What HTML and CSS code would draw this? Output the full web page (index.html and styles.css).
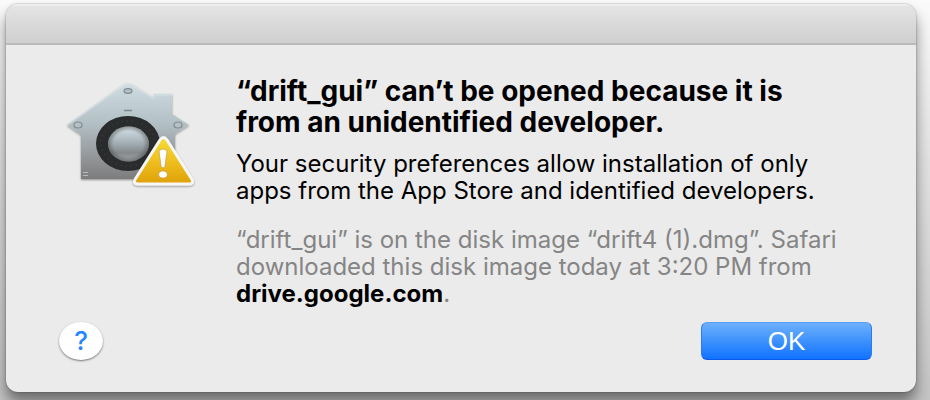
FILE: index.html
```html
<!DOCTYPE html>
<html lang="en">
<head>
<meta charset="utf-8">
<title>Unidentified developer</title>
<link rel="stylesheet" href="styles.css">
</head>
<body>
<main class="dialog" role="alertdialog" aria-labelledby="title" aria-describedby="message">
  <header class="titlebar"></header>
  <div class="content">
    <svg class="icon" viewBox="0 0 140 112" preserveAspectRatio="none" aria-hidden="true">
      <defs>
        <linearGradient id="house" x1="0" y1="0" x2="0" y2="1">
          <stop offset="0" stop-color="#cfdde2"/><stop offset=".4" stop-color="#b4c2c8"/><stop offset=".75" stop-color="#96999b"/><stop offset="1" stop-color="#7c7c7c"/>
        </linearGradient>
        <linearGradient id="knob" x1="0" y1="0" x2="0" y2="1">
          <stop offset="0" stop-color="#d5e4ea"/><stop offset=".45" stop-color="#a5b1b7"/><stop offset=".75" stop-color="#85898c"/><stop offset="1" stop-color="#a5a8aa"/>
        </linearGradient>
        <radialGradient id="edge"><stop offset=".72" stop-color="#444" stop-opacity="0"/><stop offset="1" stop-color="#444" stop-opacity=".5"/></radialGradient>
        <linearGradient id="warn" x1="0" y1="0" x2="0" y2="1">
          <stop offset="0" stop-color="#f7dc35"/><stop offset=".5" stop-color="#efc020"/><stop offset="1" stop-color="#dfa008"/>
        </linearGradient>
        <filter id="shade" x="-10%" y="-10%" width="125%" height="130%"><feDropShadow dx="0" dy="1" stdDeviation="1.2" flood-color="#000" flood-opacity=".4"/></filter>
      </defs>
      <path filter="url(#shade)" fill="url(#house)" d="M67 5 Q72 2 77 5 L98 18 V14 H116 V34 L133 45 L119 54 V99 H25 V55 L11 45 Z"/>
      <path fill="none" stroke="#dce7eb" stroke-opacity=".7" d="M12 45 L67 6 Q72 3 77 6 L98 19 V15 H116"/>
      <g fill="#b4c0c5" stroke="#7f8b8f" stroke-width="1.2">
        <ellipse cx="72" cy="11" rx="4" ry="2.3"/><ellipse cx="22" cy="45" rx="4" ry="3"/><ellipse cx="122" cy="45" rx="4" ry="3"/>
      </g>
      <path stroke="#7d898d" stroke-width="1.5" d="M68 30.500H76"/>
      <path stroke="#b9b9b9" d="M27 92.500H32M27 95.500H32"/>
      <ellipse cx="72" cy="63.500" rx="32" ry="27.500" fill="#292b2c"/>
      <ellipse cx="72" cy="63.500" rx="27" ry="22.500" fill="none" stroke="#383b3c" stroke-width="2" stroke-dasharray="1 4"/>
      <ellipse cx="72.500" cy="64" rx="20.500" ry="17.500" fill="url(#knob)"/>
      <ellipse cx="72.500" cy="64" rx="20.500" ry="17.500" fill="url(#edge)"/>
      <path filter="url(#shade)" fill="url(#warn)" stroke="#f7f7f7" stroke-width="3" stroke-linejoin="round" d="M104 60 Q107.500 55 111 60 L136 99.500 Q138 104 133 104 H82 Q77 104 79 99.500 Z"/>
      <path fill="#fff" stroke="#b9974a" stroke-width=".6" d="M103 71 Q107 67 111 71 L108.800 87 Q107 88.500 105.200 87 Z"/>
      <ellipse cx="107" cy="94.500" rx="4.300" ry="3.500" fill="#fff" stroke="#b9974a" stroke-width=".6"/>
    </svg>
    <div class="text">
      <h1 id="title">“drift_gui” can’t be opened because it is<br>from an unidentified developer.</h1>
      <p id="message">Your security preferences allow installation of only<br>apps from the App Store and identified developers.</p>
      <p class="source">“drift_gui” is on the disk image “drift4 (1).dmg”. Safari<br>downloaded this disk image today at 3:20 PM from<br><strong>drive.google.com</strong>.</p>
    </div>
  </div>
  <footer class="actions">
    <button class="help" type="button" aria-label="Help">?</button>
    <button class="ok" type="button">OK</button>
  </footer>
</main>
</body>
</html>
```
FILE: styles.css
```css
* { box-sizing: border-box; }

body {
  display: flex;
  min-height: 100vh;
  margin: 0;
  padding: 4px 14px 8px 6px;
  font-family: Inter, "Liberation Sans", sans-serif;
  background: linear-gradient(#fafafa, #e2e2e2 40%, #c4c4c4);
}

.dialog {
  display: flex;
  flex: 1;
  flex-direction: column;
  overflow: hidden;
  border-radius: 12px;
  background: #ebebeb;
  box-shadow: 0 0 2px rgba(0, 0, 0, .4), 0 10px 14px rgba(0, 0, 0, .45);
}

.titlebar {
  height: 41px;
  border-top: 2px solid #eee;
  border-bottom: 2px solid #bababa;
  background: linear-gradient(#e4e4e4, #cfcfcf);
}

.content {
  display: flex;
  flex: 1;
  gap: 40px;
  padding: 31px 48px 0 50px;
}

.icon {
  flex: none;
  width: 140px;
  height: 112px;
  margin-top: 4px;
}

h1, p { margin: 0; white-space: nowrap; }

h1 {
  margin-bottom: 12px;
  font-size: 28px;
  font-weight: 700;
  line-height: 31px;
  color: #000;
}

p {
  font-size: 24px;
  line-height: 27px;
  color: #000;
}

.source { margin-top: 22px; color: #858585; }
.source strong { color: #000; }

.actions {
  display: flex;
  align-items: center;
  justify-content: space-between;
  padding: 0 44px 32px 53px;
}

button { padding: 0; border: 0; font-family: inherit; }

.help {
  width: 44px;
  height: 38px;
  border-radius: 50%;
  font-size: 26px;
  font-weight: 500;
  line-height: 38px;
  color: #2587ff;
  background: #fff;
  box-shadow: 0 1px 2px rgba(0, 0, 0, .5);
}

.ok {
  width: 171px;
  height: 38px;
  border: 1px solid;
  border-color: #559ff5 #2b7cf3 #0a58ee;
  border-radius: 6px;
  font-family: "Liberation Sans", sans-serif;
  font-size: 26px;
  line-height: 36px;
  color: #fff;
  background: linear-gradient(#6cb0fb, #1073ff);
}
```
